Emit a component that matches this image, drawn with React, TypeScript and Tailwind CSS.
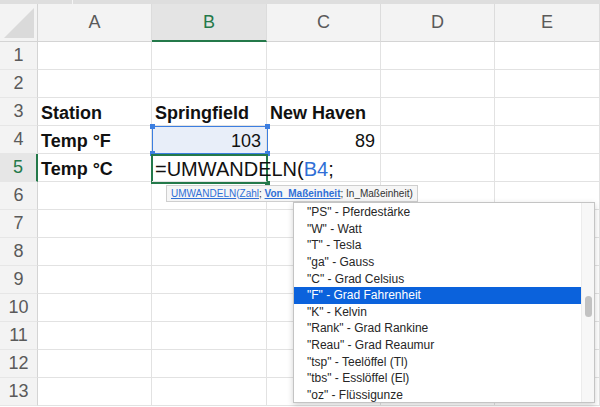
import React from 'react';

const COLS = ['A', 'B', 'C', 'D', 'E'];

const UNITS = [
  '"PS" - Pferdestärke',
  '"W" - Watt',
  '"T" - Tesla',
  '"ga" - Gauss',
  '"C" - Grad Celsius',
  '"F" - Grad Fahrenheit',
  '"K" - Kelvin',
  '"Rank" - Grad Rankine',
  '"Reau" - Grad Reaumur',
  '"tsp" - Teelöffel (Tl)',
  '"tbs" - Esslöffel (El)',
  '"oz" - Flüssigunze',
];

type Cell = { text?: React.ReactNode; bold?: boolean; right?: boolean };

const DATA: Record<number, Cell[]> = {
  3: [{ text: 'Station', bold: true }, { text: 'Springfield', bold: true }, { text: 'New Haven', bold: true }],
  4: [{ text: 'Temp °F', bold: true }, { text: '103', right: true }, { text: '89', right: true }],
  5: [
    { text: 'Temp °C', bold: true },
    {
      text: (
        <span className="relative z-30 text-[20px]">
          =UMWANDELN(<span className="text-[#2f6fd6]">B4</span>;
        </span>
      ),
    },
  ],
};

function Handle({ className }: { className: string }) {
  return <div className={`absolute w-[5px] h-[5px] ${className}`} />;
}

export default function App() {
  const rows = Array.from({ length: 13 }, (_, i) => i + 1);

  return (
    <div className="relative w-[600px] h-[407px] overflow-hidden bg-white font-['Liberation_Sans',Arial,sans-serif] text-[#111]">
      {/* top toolbar edge */}
      <div className="flex h-[4px] bg-[#dedede]">
        <div className="w-[73px] border-r border-[#f4f4f4]" />
      </div>

      <div className="grid grid-cols-[38px_114px_115px_114px_114px_1fr] grid-rows-[38px_repeat(13,28px)]">
        {/* corner */}
        <div className="relative bg-[#f3f3f3] border-r border-b border-[#d4d4d4] overflow-hidden">
          <svg className="absolute right-[3px] bottom-[3px]" width="30" height="30" viewBox="0 0 30 30">
            <polygon points="30,0 30,30 0,30" fill="#dadada" />
          </svg>
        </div>
        {COLS.map((c) => (
          <div
            key={c}
            className={`flex items-center justify-center text-[18px] border-r border-[#dcdcdc] ${
              c === 'B'
                ? 'bg-[#e4e4e4] text-[#24794a] border-b-2 border-b-[#24794a]'
                : 'bg-[#f3f3f3] text-[#5a5a5a] border-b border-b-[#d4d4d4]'
            }`}
          >
            {c}
          </div>
        ))}

        {rows.map((r) => (
          <React.Fragment key={r}>
            <div
              className={`flex items-center justify-center text-[18px] border-b border-[#e6e6e6] ${
                r === 5
                  ? 'bg-[#e6e6e6] text-[#24794a] border-r-2 border-r-[#24794a]'
                  : 'bg-[#f3f3f3] text-[#5a5a5a] border-r border-r-[#d4d4d4]'
              }`}
            >
              {r}
            </div>
            {COLS.map((c, ci) => {
              const cell = DATA[r]?.[ci];
              const sel = r === 4 && c === 'B';
              return (
                <div
                  key={c}
                  className={`relative flex items-center pt-[3px] whitespace-nowrap text-[18px] border-r border-b border-[#e2e2e2] ${
                    sel ? 'bg-[#e8eef9]' : ''
                  } ${cell?.right ? 'justify-end pr-[5px]' : 'pl-[3px]'} ${cell?.bold ? 'font-bold' : ''} ${
                    r === 5 && c === 'B' ? 'z-30 border-r-transparent' : ''
                  }`}
                >
                  {cell?.text}
                </div>
              );
            })}
          </React.Fragment>
        ))}
      </div>

      {/* B4 selection */}
      <div className="absolute left-[152px] top-[126px] w-[116px] h-[28px] border border-[#3c7ee0] pointer-events-none">
        <Handle className="-left-[3px] -top-[3px] bg-[#3c7ee0]" />
        <Handle className="-right-[3px] -top-[3px] bg-[#3c7ee0]" />
        <Handle className="-left-[3px] -bottom-[3px] bg-[#3c7ee0]" />
        <Handle className="-right-[3px] -bottom-[3px] bg-[#3c7ee0]" />
      </div>

      {/* B5 active cell */}
      <div className="absolute left-[151px] top-[154px] w-[117px] h-[30px] border-2 border-[#24794a] pointer-events-none z-20">
        <Handle className="-right-[4px] -bottom-[4px] bg-[#24794a]" />
      </div>

      {/* function tooltip */}
      <div className="absolute left-[166px] top-[185px] h-[17px] px-[4px] flex items-center bg-[#f6f6f6] border border-[#cfcfcf] text-[10px] text-[#333] whitespace-nowrap z-40">
        <span className="text-[#2f6fd6] underline">UMWANDELN</span>
        <span className="text-[#2f6fd6]">(</span>
        <span className="text-[#2f6fd6] underline">Zahl</span>
        <span>;&nbsp;</span>
        <span className="text-[#2f6fd6] underline font-bold">Von_Maßeinheit</span>
        <span>; In_Maßeinheit)</span>
      </div>

      {/* unit dropdown */}
      <div className="absolute left-[293px] top-[202px] w-[302px] h-[201px] flex bg-white border border-[#c4c4c4] shadow-[0_2px_6px_rgba(0,0,0,0.18)] z-40">
        <div className="flex-1 flex flex-col pt-[1px]">
          {UNITS.map((u) => {
            const active = u.startsWith('"F"');
            return (
              <div
                key={u}
                className={`h-[16.6px] flex items-center pl-[13px] text-[12px] whitespace-nowrap ${
                  active ? 'bg-[#0b62dc] text-white' : 'text-[#262626]'
                }`}
              >
                {u}
              </div>
            );
          })}
        </div>
        <div className="w-[13px] bg-[#f7f7f7] border-l border-[#ececec] pt-[93px] flex justify-center">
          <div className="w-[7px] h-[21px] rounded-full bg-[#c2c2c2]" />
        </div>
      </div>
    </div>
  );
}
